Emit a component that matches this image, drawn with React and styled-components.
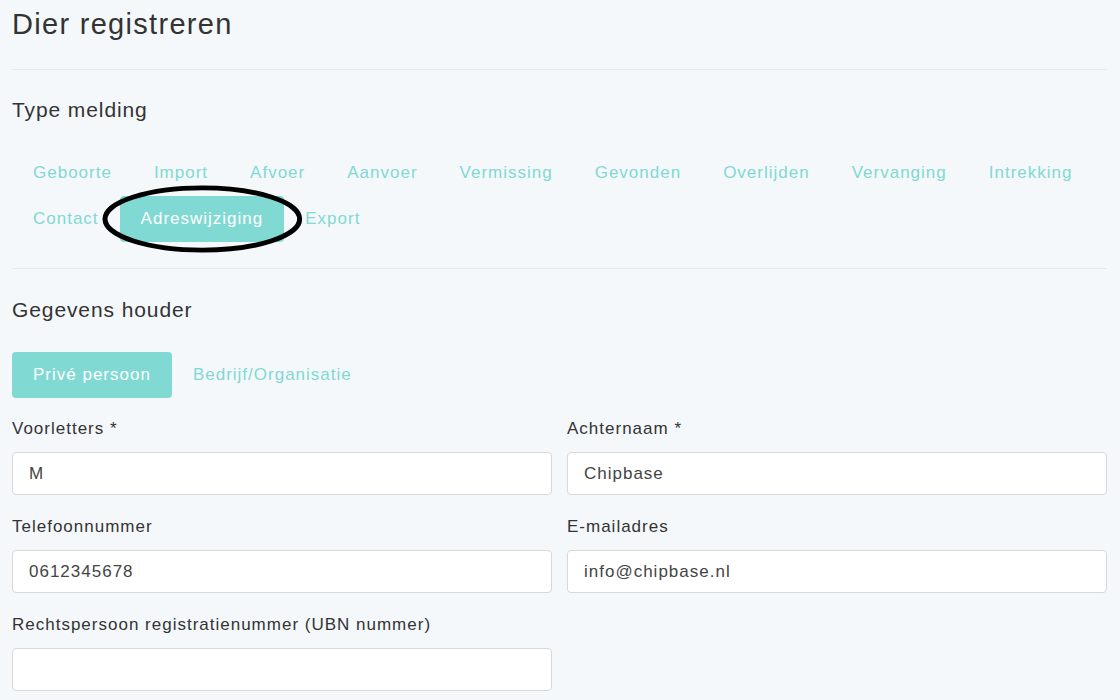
import React from 'react';
import styled, { createGlobalStyle } from 'styled-components';

const Global = createGlobalStyle`
  body { margin: 0; background: #f5f8fb; font-family: "Liberation Sans", Arial, sans-serif; letter-spacing: 1px; }
  * { box-sizing: border-box; }
`;

const Page = styled.div`
  padding: 0 13px 0 12px;
`;

const Title = styled.h1`
  margin: 0;
  padding-top: 8px;
  height: 70px;
  font-size: 29px;
  font-weight: 400;
  letter-spacing: 1.3px;
  color: #333;
  border-bottom: 1px solid #e6e9ec;
`;

const Section = styled.div`
  border-bottom: ${({ last }) => (last ? 'none' : '1px solid #e6e9ec')};
  padding: ${({ last }) => (last ? '29px 0 0' : '28px 0 26px')};
`;

const SectionTitle = styled.h2`
  margin: 0 0 ${({ gap }) => gap}px;
  font-size: 21px;
  font-weight: 400;
  letter-spacing: 0.9px;
  color: #333;
`;

const Tabs = styled.div`
  display: flex;
  flex-wrap: wrap;
`;

const Tab = styled.div`
  position: relative;
  padding: 13px 21px;
  font-size: 17px;
  color: ${({ active }) => (active ? '#fff' : '#80d9d3')};
  background: ${({ active }) => (active ? '#80d9d3' : 'transparent')};
  border-radius: 4px;
  white-space: nowrap;
`;

const Ring = styled.svg`
  position: absolute;
  left: -18px;
  top: -11px;
  width: calc(100% + 36px);
  height: calc(100% + 22px);
  overflow: visible;
`;

const Grid = styled.div`
  display: grid;
  grid-template-columns: 1fr 1fr;
  column-gap: 15px;
  margin-top: 9px;
`;

const Field = styled.div`
  padding-top: 12px;
  height: 98px;
`;

const Label = styled.div`
  font-size: 17px;
  color: #333;
  margin-bottom: 13px;
`;

const Input = styled.div`
  height: 43px;
  background: #fff;
  border: 1px solid #d5d9dd;
  border-radius: 4px;
  padding: 0 16px;
  display: flex;
  align-items: center;
  font-size: 17px;
  color: #444;
`;

const types = ['Geboorte', 'Import', 'Afvoer', 'Aanvoer', 'Vermissing', 'Gevonden', 'Overlijden', 'Vervanging', 'Intrekking', 'Contact', 'Adreswijziging', 'Export'];

const fields = [
  ['Voorletters *', 'M'],
  ['Achternaam *', 'Chipbase'],
  ['Telefoonnummer', '0612345678'],
  ['E-mailadres', 'info@chipbase.nl'],
  ['Rechtspersoon registratienummer (UBN nummer)', ''],
];

export default function App() {
  return (
    <Page>
      <Global />
      <Title>Dier registreren</Title>
      <Section>
        <SectionTitle gap={28}>Type melding</SectionTitle>
        <Tabs>
          {types.map(t => (
            <Tab key={t} active={t === 'Adreswijziging'}>
              {t}
              {t === 'Adreswijziging' && (
                <Ring viewBox="0 0 200 70" preserveAspectRatio="none">
                  <ellipse cx="100" cy="35" rx="97" ry="32" fill="none" stroke="#000" strokeWidth="5" />
                </Ring>
              )}
            </Tab>
          ))}
        </Tabs>
      </Section>
      <Section last>
        <SectionTitle gap={30}>Gegevens houder</SectionTitle>
        <Tabs>
          <Tab active>Privé persoon</Tab>
          <Tab>Bedrijf/Organisatie</Tab>
        </Tabs>
        <Grid>
          {fields.map(([l, v]) => (
            <Field key={l}>
              <Label>{l}</Label>
              <Input>{v}</Input>
            </Field>
          ))}
        </Grid>
      </Section>
    </Page>
  );
}
